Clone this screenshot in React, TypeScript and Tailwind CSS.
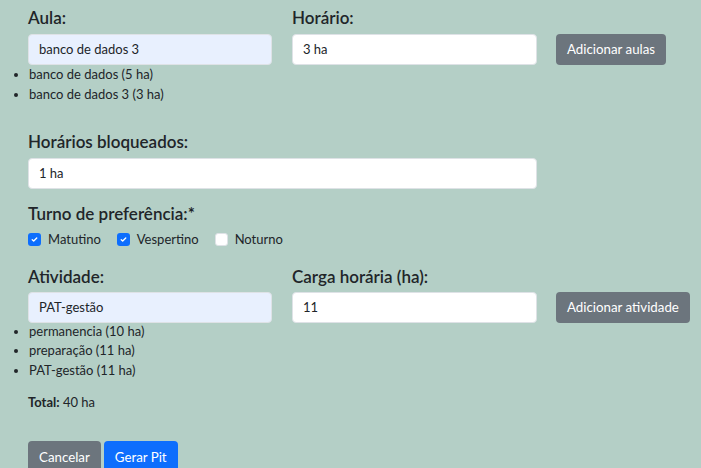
import React from "react";

const font = { fontFamily: 'Lato, "Noto Sans", sans-serif' };

function Label({ children, className = "" }: { children: React.ReactNode; className?: string }) {
  return (
    <div className={`h-[27px] text-[17px] leading-[27px] font-semibold text-[#212529] whitespace-nowrap ${className}`}>{children}</div>
  );
}

function Input({ value, autofill = false, className = "" }: { value: string; autofill?: boolean; className?: string }) {
  return (
    <div
      className={`shrink-0 h-[31px] rounded-[4px] border border-[#dee2e6] px-[10px] flex items-center text-[13px] text-[#212529] ${
        autofill ? "bg-[#e8f0fe]" : "bg-white"
      } ${className}`}
    >
      {value}
    </div>
  );
}

function Check({ checked, label }: { checked: boolean; label: string }) {
  return (
    <div className="flex items-center gap-[7px]">
      <div
        className={`w-[13px] h-[13px] rounded-[3px] flex items-center justify-center ${
          checked ? "bg-[#0d6efd]" : "bg-white border border-[#dee2e6]"
        }`}
      >
        {checked && (
          <svg width="9" height="9" viewBox="0 0 20 20">
            <path d="M5 10.5l3.2 3L15 6.5" fill="none" stroke="#fff" strokeWidth="3" strokeLinecap="round" strokeLinejoin="round" />
          </svg>
        )}
      </div>
      <span className="text-[13px] text-[#212529]">{label}</span>
    </div>
  );
}

export default function App() {
  return (
    <div className="w-[701px] h-[468px] overflow-hidden bg-[#b4cfc6] text-[#212529]" style={font}>
      <div className="pt-1">
        <div className="flex px-7">
          <div className="w-[244px] shrink-0">
            <Label>Aula:</Label>
          </div>
          <div className="w-[245px] ml-5 shrink-0">
            <Label>Horário:</Label>
          </div>
        </div>
        <div className="flex px-7 mt-[3px] items-center">
          <Input value="banco de dados 3" autofill className="w-[244px]" />
          <Input value="3 ha" className="w-[245px] ml-5" />
          <button className="shrink-0 whitespace-nowrap ml-[19px] h-[31px] px-[11px] rounded-[4px] bg-[#6c757d] text-white text-[13.3px]">
            Adicionar aulas
          </button>
        </div>
        <ul className="list-disc pl-[29px] text-[13px] leading-[19.5px] marker:text-[#212529]">
          <li>banco de dados (5 ha)</li>
          <li>banco de dados 3 (3 ha)</li>
        </ul>

        <div className="px-7 mt-[23.5px]">
          <Label>Horários bloqueados:</Label>
          <Input value="1 ha" className="w-[509px] mt-[3.5px]" />
          <Label className="mt-[10.5px]">Turno de preferência:*</Label>
          <div className="flex items-center gap-[16px] h-[20px] mt-[3px]">
            <Check checked label="Matutino" />
            <Check checked label="Vespertino" />
            <Check checked={false} label="Noturno" />
          </div>
        </div>

        <div className="flex px-7 mt-[13px]">
          <div className="w-[244px] shrink-0">
            <Label>Atividade:</Label>
          </div>
          <div className="w-[245px] ml-5 shrink-0">
            <Label>Carga horária (ha):</Label>
          </div>
        </div>
        <div className="flex px-7 mt-[2.5px] items-center">
          <Input value="PAT-gestão" autofill className="w-[244px]" />
          <Input value="11" className="w-[245px] ml-5" />
          <button className="shrink-0 whitespace-nowrap ml-[19px] h-[31px] px-[11px] rounded-[4px] bg-[#6c757d] text-white text-[13.3px]">
            Adicionar atividade
          </button>
        </div>
        <ul className="list-disc pl-[29px] text-[13px] leading-[19.5px] -mt-[1.5px]">
          <li>permanencia (10 ha)</li>
          <li>preparação (11 ha)</li>
          <li>PAT-gestão (11 ha)</li>
        </ul>
        <div className="px-7 mt-[13px] text-[13px] leading-[19.5px]">
          <span className="font-bold">Total:</span> 40 ha
        </div>
        <div className="px-7 mt-[28px] flex gap-[3px]">
          <button className="h-[34px] px-[11px] rounded-[4px] bg-[#6c757d] text-white text-[13.3px]">Cancelar</button>
          <button className="h-[34px] px-[11px] rounded-[4px] bg-[#0d6efd] text-white text-[13.3px]">Gerar Pit</button>
        </div>
      </div>
    </div>
  );
}
